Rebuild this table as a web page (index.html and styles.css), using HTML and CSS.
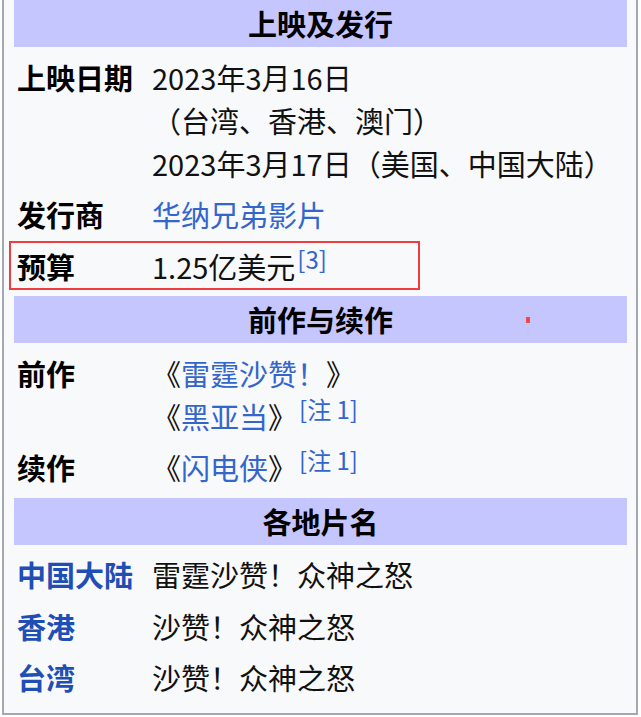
FILE: index.html
```html
<!DOCTYPE html>
<html lang="zh-CN">
<head>
    <meta charset="UTF-8">
    <meta name="viewport" content="width=device-width, initial-scale=1.0">
    <title>雷霆沙赞！众神之怒</title>
    <link rel="stylesheet" href="styles.css">
</head>
<body>
    <div class="infobox">
        <div class="head">上映及发行</div>

        <div class="row">
            <div class="label">上映日期</div>
            <div class="value">2023年3月16日<br>（台湾、香港、澳门）<br>2023年3月17日（美国、中国大陆）</div>
        </div>

        <div class="row">
            <div class="label">发行商</div>
            <div class="value"><a href="#">华纳兄弟影片</a></div>
        </div>

        <div class="row marked">
            <div class="label">预算</div>
            <div class="value">1.25亿美元<sup><a href="#">[3]</a></sup></div>
        </div>

        <div class="head">前作与续作<span class="dot"></span></div>

        <div class="row">
            <div class="label">前作</div>
            <div class="value">《<a href="#">雷霆沙赞！</a>》<br>《<a href="#">黑亚当</a>》<sup><a href="#">[注 1]</a></sup></div>
        </div>

        <div class="row">
            <div class="label">续作</div>
            <div class="value">《<a href="#">闪电侠</a>》<sup><a href="#">[注 1]</a></sup></div>
        </div>

        <div class="head">各地片名</div>

        <div class="row">
            <div class="label"><a href="#">中国大陆</a></div>
            <div class="value">雷霆沙赞！众神之怒</div>
        </div>

        <div class="row">
            <div class="label"><a href="#">香港</a></div>
            <div class="value">沙赞！众神之怒</div>
        </div>

        <div class="row">
            <div class="label"><a href="#">台湾</a></div>
            <div class="value">沙赞！众神之怒</div>
        </div>
    </div>
</body>
</html>
```

FILE: styles.css
```css
body {
    margin: 0;
    background: #ffffff;
    font-family: "Noto Sans CJK SC", "Noto Sans", sans-serif;
    font-size: 29px;
    color: #111111;
}

.infobox {
    margin-left: 2px;
    width: 636px;
    box-sizing: border-box;
    background: #f8f9fa;
    border: 2px solid #a2a9b1;
    border-top: none;
    padding: 0 9px 14px 10px;
    display: flex;
    flex-direction: column;
    gap: 8.5px;
}

.head {
    position: relative;
    height: 47px;
    line-height: 47px;
    background: #c6c6ff;
    text-align: center;
    font-weight: bold;
    color: #000000;
}

.dot {
    position: absolute;
    left: 512px;
    top: 21px;
    width: 4px;
    height: 6px;
    background: #f04848;
}

.row {
    position: relative;
    display: grid;
    grid-template-columns: 135px 1fr;
    padding-left: 3px;
    line-height: 43px;
}

.label {
    font-weight: bold;
    color: #000000;
}

a {
    color: #3366cc;
    text-decoration: none;
}

.label a {
    color: #1f4fb4;
}

sup {
    font-size: 24px;
    line-height: 1;
    vertical-align: 10px;
    margin-left: 2px;
}

/* annotation box round the budget row */
.marked::after {
    content: "";
    position: absolute;
    left: -5px;
    top: -4px;
    width: 407px;
    height: 45px;
    border: 2px solid #f03c3c;
}
```
